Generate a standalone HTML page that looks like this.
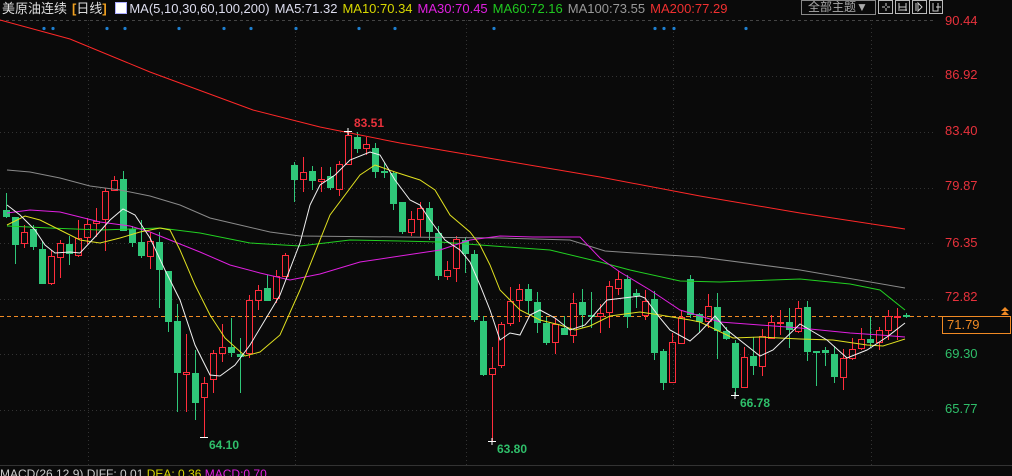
<!DOCTYPE html>
<html><head><meta charset="utf-8"><style>
html,body{margin:0;padding:0;background:#0a0a0a;width:1012px;height:476px;overflow:hidden}
body{position:relative;font-family:"Liberation Sans","Noto Sans CJK SC",sans-serif}
.hdr{position:absolute;left:2px;top:1px;font-size:13px;white-space:nowrap;line-height:16px}
.hdr span{margin-right:5px}
.ax{position:absolute;left:945px;font-size:13px;line-height:14px}
.r{color:#e8323c}.g{color:#2fbf6a}
</style></head><body>
<svg id="s" width="1012" height="476" style="position:absolute;left:0;top:0">
<g stroke="#333" stroke-dasharray="1,3" stroke-width="1">
<line x1="0" y1="20.5" x2="935" y2="20.5" stroke="#444" stroke-dasharray="3,3"/>
<line x1="0" y1="76.5" x2="935" y2="76.5"/><line x1="0" y1="132.5" x2="935" y2="132.5"/>
<line x1="0" y1="188.5" x2="935" y2="188.5"/><line x1="0" y1="243.5" x2="935" y2="243.5"/>
<line x1="0" y1="299.5" x2="935" y2="299.5"/><line x1="0" y1="354.5" x2="935" y2="354.5"/>
<line x1="0" y1="410.5" x2="935" y2="410.5"/>
<line x1="88.5" y1="20" x2="88.5" y2="465"/><line x1="295.5" y1="20" x2="295.5" y2="465"/>
<line x1="466.5" y1="20" x2="466.5" y2="465"/><line x1="673.5" y1="20" x2="673.5" y2="465"/>
<line x1="871.5" y1="20" x2="871.5" y2="465"/>
</g>
<line x1="0" y1="465.5" x2="1012" y2="465.5" stroke="#333"/>
<line x1="0" y1="316.5" x2="942" y2="316.5" stroke="#f08a24" stroke-dasharray="4,3"/>
<g id="c"></g><g id="m" fill="none" stroke-width="1"></g>
<g fill="#1e7fd0" id="d"></g>
<g stroke="#fff" stroke-width="1"><line x1="344" y1="131.5" x2="352" y2="131.5"/><line x1="348" y1="128" x2="348" y2="135"/>
<line x1="200" y1="437.5" x2="208" y2="437.5"/><line x1="488" y1="441.5" x2="496" y2="441.5"/><line x1="492" y1="438" x2="492" y2="445"/>
<line x1="731" y1="395.5" x2="739" y2="395.5"/><line x1="735" y1="392" x2="735" y2="399"/></g>
<text x="354" y="127" fill="#e8323c" font-size="12" font-weight="bold" font-family="Liberation Sans">83.51</text>
<text x="209" y="449" fill="#2fbf6a" font-size="12" font-weight="bold" font-family="Liberation Sans">64.10</text>
<text x="497" y="453" fill="#2fbf6a" font-size="12" font-weight="bold" font-family="Liberation Sans">63.80</text>
<text x="740" y="407" fill="#2fbf6a" font-size="12" font-weight="bold" font-family="Liberation Sans">66.78</text>
<rect x="942.5" y="316.5" width="68" height="17" fill="#0a0a0a" stroke="#f08a24"/>
<path d="M1001 315 l4 -4 l4 4z M1001 311 l4 -4 l4 4z" fill="#f08a24"/>
<rect x="801.5" y="0.5" width="74" height="14" fill="none" stroke="#888"/>
<g fill="none" stroke="#bbb"><rect x="878.5" y="0.5" width="14" height="13"/><rect x="895.5" y="0.5" width="14" height="13"/><rect x="912.5" y="0.5" width="14" height="13"/><rect x="929.5" y="0.5" width="13" height="13"/></g>
<g stroke="#ccc"><path d="M882 7h3M887 7h3M886 3v3M886 8v3M899 3v8M906 3v8M899 7h7M900 10h7M916 3v8M918 3l4 4l-4 4zM933 3v8h5v-8M936 7h5"/></g>
</svg>
<div class="hdr"><span style="color:#ddd">美原油连续</span><span style="color:#ddd"><b style="color:#f0a020">[</b>日线<b style="color:#f0a020">]</b></span>
<span style="display:inline-block;width:10px;height:10px;border:1px solid #aaf;background:#fff;vertical-align:-1px;margin-right:2px"></span><span style="color:#dde">MA(5,10,30,60,100,200)</span><span style="color:#dde">MA5:71.32</span><span style="color:#d8d800">MA10:70.34</span><span style="color:#e020e0">MA30:70.45</span><span style="color:#20c820">MA60:72.16</span><span style="color:#999">MA100:73.55</span><span style="color:#f03030">MA200:77.29</span></div>
<div style="position:absolute;left:808px;top:0px;font-size:12px;color:#aaa;line-height:15px">全部主题▼</div>
<div class="ax r" style="top:14px">90.44</div><div class="ax r" style="top:68px">86.92</div>
<div class="ax r" style="top:124px">83.40</div><div class="ax r" style="top:179px">79.87</div>
<div class="ax r" style="top:236px">76.35</div><div class="ax r" style="top:290px">72.82</div>
<div class="ax" style="top:318px;left:947px;color:#f08a24">71.79</div>
<div class="ax g" style="top:347px">69.30</div><div class="ax g" style="top:402px">65.77</div>
<div style="position:absolute;left:0;top:467px;font-size:12px;white-space:nowrap;line-height:14px"><span style="color:#ccc">MACD(26,12,9) DIFF: 0.01 </span><span style="color:#d8d800">DEA: 0.36 </span><span style="color:#e020e0">MACD:0.70</span></div>
<script>
var C=[[6,'g',210,217,193,218],[15,'g',217,245,217,264],[24,'r',232,243,225,248],[33,'g',229,247,225,250],[42,'g',249,284,241,284],[51,'r',256,283,250,285],[60,'r',243,257,240,278],[69,'g',244,254,236,265],[78,'r',238,255,220,257],[87,'r',224,237,218,244],[96,'r',221,223,208,237],[105,'r',191,219,188,251],[114,'r',180,190,176,190],[123,'g',179,231,171,231],[132,'g',229,243,226,247],[141,'g',242,256,220,258],[150,'r',241,256,232,269],[159,'g',242,270,232,308],[168,'g',271,322,271,332],[177,'g',321,373,304,412],[186,'r',372,374,334,412],[195,'g',373,403,350,420],[204,'r',383,397,377,437],[213,'r',353,379,350,393],[222,'r',347,353,324,362],[231,'g',347,353,318,357],[240,'g',354,357,338,393],[249,'r',300,353,295,358],[258,'r',290,300,285,310],[267,'g',288,301,275,301],[276,'r',276,298,270,303],[285,'r',255,276,253,277],[294,'g',165,180,162,202],[303,'r',172,179,157,192],[312,'g',171,181,166,190],[321,'r',179,181,167,192],[330,'g',176,188,167,190],[339,'r',164,189,161,196],[348,'r',135,164,131,165],[357,'g',137,149,132,153],[366,'r',144,148,137,155],[375,'g',148,172,143,178],[384,'g',171,173,163,178],[393,'g',173,204,172,210],[402,'g',202,232,202,234],[411,'r',219,232,211,236],[420,'r',208,219,202,237],[429,'g',208,232,202,240],[438,'g',233,276,226,280],[447,'r',270,276,261,280],[456,'r',239,268,236,282],[465,'g',240,254,237,273],[474,'g',254,320,250,322],[483,'g',321,375,316,376],[492,'r',368,374,347,441],[501,'r',324,365,322,368],[510,'r',301,323,287,326],[519,'r',289,300,284,322],[528,'g',289,301,284,314],[537,'g',302,323,292,333],[546,'g',323,343,317,345],[555,'r',324,342,318,354],[564,'g',328,335,316,335],[573,'r',303,335,293,343],[582,'g',302,315,289,328],[591,'g',315,317,292,328],[600,'r',313,316,304,333],[609,'r',286,312,281,328],[618,'r',279,288,271,295],[627,'g',279,317,275,328],[636,'g',293,296,289,308],[645,'r',301,315,290,320],[654,'g',299,353,291,360],[663,'g',351,383,349,390],[672,'r',342,382,333,383],[681,'r',317,343,310,343],[690,'g',279,315,275,318],[699,'g',314,322,313,332],[708,'r',306,321,294,328],[717,'g',307,331,293,359],[726,'g',331,339,327,340],[735,'g',343,388,340,395],[744,'r',357,387,347,388],[753,'g',356,366,337,375],[762,'r',336,366,329,376],[771,'r',322,338,315,338],[780,'r',322,323,310,335],[789,'g',322,330,308,348],[798,'r',308,331,301,333],[807,'g',307,352,301,361],[816,'g',351,353,352,386],[825,'g',350,353,347,366],[834,'g',354,377,346,383],[843,'r',358,377,349,390],[852,'r',349,358,338,360],[861,'r',339,348,328,350],[870,'g',339,343,317,347],[879,'r',330,342,327,350],[888,'r',316,330,310,340],[897,'r',316,317,308,340],[906,'g',315,317,313,318]];
var h='';C.forEach(function(c){var x=c[0],col=c[1]=='r'?'#ff2d3c':'#2fc779';
if(c[1]=='r'){h+='<line x1="'+(x+.5)+'" y1="'+c[4]+'" x2="'+(x+.5)+'" y2="'+c[2]+'" stroke="'+col+'"/><line x1="'+(x+.5)+'" y1="'+c[3]+'" x2="'+(x+.5)+'" y2="'+c[5]+'" stroke="'+col+'"/><rect x="'+(x-3+.5)+'" y="'+(c[2]+.5)+'" width="6" height="'+Math.max(c[3]-c[2],1)+'" fill="none" stroke="'+col+'"/>';}
else{h+='<line x1="'+(x+.5)+'" y1="'+c[4]+'" x2="'+(x+.5)+'" y2="'+c[5]+'" stroke="'+col+'"/><rect x="'+(x-3)+'" y="'+c[2]+'" width="7" height="'+Math.max(c[3]-c[2],1.5)+'" fill="'+col+'"/>';}});
document.getElementById('c').innerHTML=h;
var M=[['#ff2828','0,20 70,39 150,72 253,110 320,127 400,143 500,160 600,177 700,196 800,213 905,229'],
['#8a8a8a','7,170 30,172 60,178 90,186 120,190 150,196 180,205 210,218 240,225 270,232 300,236 400,237 500,238 570,240 605,251 650,254 700,257 800,270 905,288'],
['#22d022','7,226 50,228 100,230 160,228 200,233 250,243 300,246 350,240 400,241 440,242 480,245 550,250 600,262 630,270 680,281 720,282 800,279 850,284 880,290 905,310'],
['#e020e0','7,213 30,210 60,212 80,217 100,222 130,226 150,232 170,240 200,252 230,265 260,273 290,280 320,274 360,262 400,256 440,250 470,240 500,236 533,237 580,237 600,258 620,272 650,290 680,310 720,322 760,325 800,328 850,333 880,335 905,337'],
['#e0e020','7,225 25,216 40,220 60,230 80,240 100,243 120,238 140,232 160,228 170,230 180,250 195,285 210,315 225,338 245,356 260,352 280,335 300,290 330,215 360,175 375,165 395,172 420,180 435,190 450,215 470,232 480,245 490,265 500,290 510,300 520,310 540,320 560,325 575,330 590,326 610,316 640,312 660,315 690,320 700,322 733,338 760,337 800,339 833,340 867,345 883,346 905,339'],
['#f0f0f0','7,205 20,215 35,230 45,245 55,253 70,252 80,253 95,237 110,220 123,209 135,215 150,238 165,270 180,300 195,345 210,375 220,376 235,365 250,345 265,320 280,295 300,243 310,205 320,185 335,175 350,160 370,152 380,155 395,180 410,200 420,205 430,220 445,240 460,250 470,262 480,285 490,310 500,340 510,333 520,335 530,315 540,310 555,318 570,330 585,325 607,300 640,296 645,298 660,318 670,330 690,341 700,332 715,316 727,330 760,356 773,350 800,324 827,340 847,358 867,350 887,337 905,323']];
var m='';M.forEach(function(a){m+='<polyline points="'+a[1]+'" stroke="'+a[0]+'"/>';});
document.getElementById('m').innerHTML=m;
var D=[44,53,107,125,179,224,251,296,359,395,494,655,664,674,746],d='';
D.forEach(function(x){d+='<circle cx="'+x+'" cy="28.5" r="1.6"/>';});document.getElementById('d').innerHTML=d;
</script>
</body></html>
